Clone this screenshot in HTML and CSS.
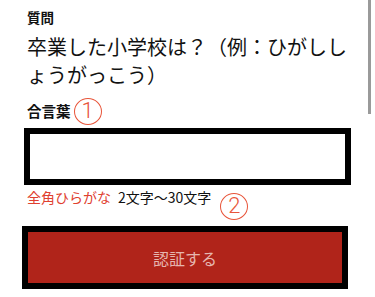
FILE: index.html
```html
<!DOCTYPE html>
<html lang="ja">
<head>
<meta charset="utf-8">
<link rel="stylesheet" href="styles.css">
</head>
<body>
<div class="page">
  <div class="label">質問</div>
  <div class="question">卒業した小学校は？（例：ひがししょうがっこう）</div>
  <div class="field-head">
    <span class="label2">合言葉</span>
    <span class="mark">1</span>
  </div>
  <div class="input"></div>
  <div class="hint">
    <span class="hint-red">全角ひらがな</span>
    <span class="hint-black">2文字〜30文字</span>
    <span class="mark mark2">2</span>
  </div>
  <div class="button">認証する</div>
</div>
<div class="scrollbar"></div>
</body>
</html>
```
FILE: styles.css
```css
html, body {
  margin: 0;
  padding: 0;
  background: #ffffff;
}
body {
  width: 375px;
  height: 297px;
  overflow: hidden;
  font-family: "Noto Sans CJK JP", "Noto Sans", sans-serif;
  color: #111111;
}
.page {
  padding: 9px 24px 0 27px;
}
.label {
  font-size: 13.5px;
  font-weight: 700;
  line-height: 16px;
}
.question {
  margin-top: 8px;
  font-size: 20px;
  line-height: 28px;
  width: 324px;
}
.field-head {
  margin-top: 8px;
  display: flex;
  align-items: center;
  height: 28px;
}
.label2 {
  font-size: 14.5px;
  font-weight: 700;
  line-height: 20px;
}
.mark {
  flex: none;
  width: 28px;
  height: 27px;
  box-sizing: border-box;
  border: 1.4px solid #e8553a;
  border-radius: 50%;
  color: #e8553a;
  font-family: Roboto, "Liberation Sans", sans-serif;
  font-size: 22px;
  font-weight: 300;
  line-height: 24px;
  text-align: center;
  margin-left: 3px;
}
.input {
  margin-top: 3px;
  margin-left: -3px;
  width: 327px;
  height: 57px;
  box-sizing: border-box;
  border: 6px solid #000000;
  background: #ffffff;
}
.hint {
  display: flex;
  align-items: flex-start;
  margin-top: 2px;
  font-size: 14px;
  line-height: 20px;
}
.hint-red {
  color: #e0402f;
}
.hint-black {
  margin-left: 7px;
}
.mark2 {
  margin-top: 6px;
  margin-left: 9px;
}
.button {
  margin-top: 6px;
  margin-left: -5px;
  width: 326px;
  height: 63px;
  box-sizing: border-box;
  border: 6px solid #000000;
  background: #b0241a;
  color: #e6b6b0;
  font-size: 16px;
  display: flex;
  align-items: center;
  justify-content: center;
}
.scrollbar {
  position: absolute;
  left: 368px;
  top: 0;
  width: 3px;
  height: 114px;
  background: #9a9a9a;
}
```
